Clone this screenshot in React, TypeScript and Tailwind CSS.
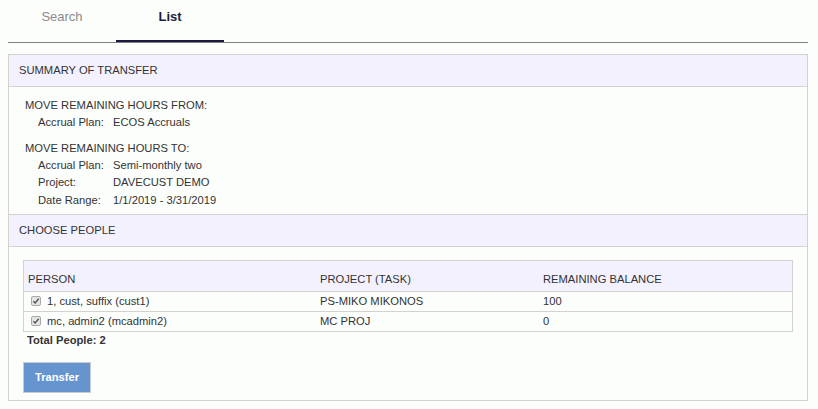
import React from "react";

const Row = ({ label, value }: { label: string; value: string }) => (
  <div className="flex h-[17.5px] items-center">
    <span className="w-[75px] pl-[13px] box-content">{label}</span>
    <span>{value}</span>
  </div>
);

export default function App() {
  const people = [
    { name: "1, cust, suffix (cust1)", project: "PS-MIKO MIKONOS", bal: "100" },
    { name: "mc, admin2 (mcadmin2)", project: "MC PROJ", bal: "0" },
  ];
  return (
    <div
      className="w-full h-[409px] bg-[#fcfefc] text-[#333333] text-[11.2px]"
      style={{ fontFamily: '"Liberation Sans", Arial, sans-serif' }}
    >
      <div className="ml-[8px] mr-[10px] flex h-[43px] border-b border-[#808080]">
        <div className="w-[108px] flex justify-center pt-[7px] text-[13px] text-[#8a8a8a]">Search</div>
        <div className="w-[108px] flex justify-center pt-[7px] text-[13px] font-bold text-[#1e1e40] border-b-2 border-[#1a1a40]">
          List
        </div>
      </div>
      <div className="ml-[8px] mr-[10px] mt-[11px] h-[347px] border border-[#d3d2cf] flex flex-col">
        <div className="h-[32px] shrink-0 flex items-center pl-[10px] bg-[#f3f1fd] border-b border-[#d3d2cf]">
          SUMMARY OF TRANSFER
        </div>
        <div className="pl-[16px] pt-[10px] pb-[5px] leading-[17px]">
          <div className="h-[17px] flex items-center">MOVE REMAINING HOURS FROM:</div>
          <Row label="Accrual Plan:" value="ECOS Accruals" />
          <div className="h-[17px] mt-[8px] flex items-center">MOVE REMAINING HOURS TO:</div>
          <Row label="Accrual Plan:" value="Semi-monthly two" />
          <Row label="Project:" value="DAVECUST DEMO" />
          <Row label="Date Range:" value="1/1/2019 - 3/31/2019" />
        </div>
        <div className="h-[33px] shrink-0 flex items-center pl-[10px] bg-[#f3f1fd] border-y border-[#d3d2cf]">
          CHOOSE PEOPLE
        </div>
        <div className="pl-[14px] pr-[14px] pt-[13px]">
          <div className="border border-[#d3d2cf]">
            <div className="grid grid-cols-[292px_223px_1fr] h-[31px] bg-[#f3f1fd] border-b border-[#d3d2cf] items-center pt-[6px]">
              <div className="pl-[4px]">PERSON</div>
              <div className="pl-[4px]">PROJECT (TASK)</div>
              <div className="pl-[4px]">REMAINING BALANCE</div>
            </div>
            {people.map((p, i) => (
              <div
                key={i}
                className={`grid grid-cols-[292px_223px_1fr] items-center ${i === 0 ? "h-[20px] border-b border-[#d3d2cf]" : "h-[19px]"}`}
              >
                <div className="pl-[7px] flex items-center">
                  <span className="w-[10px] h-[10px] mr-[6px] rounded-[2px] border border-[#a9a9a9] bg-[#e4e4e4] flex items-center justify-center">
                    <svg width="8" height="8" viewBox="0 0 8 8">
                      <path d="M1.3 4.2 L3.2 6 L6.7 1.8" fill="none" stroke="#555" strokeWidth="1.4" />
                    </svg>
                  </span>
                  {p.name}
                </div>
                <div className="pl-[4px]">{p.project}</div>
                <div className="pl-[4px]">{p.bal}</div>
              </div>
            ))}
          </div>
          <div className="mt-[1px] pl-[4px] h-[14px] flex items-center font-bold">Total People: 2</div>
          <button className="mt-[15px] w-[68px] h-[31px] bg-[#6594cf] border border-[#c9cbcf] text-white font-bold text-[11.2px]">
            Transfer
          </button>
        </div>
      </div>
    </div>
  );
}
